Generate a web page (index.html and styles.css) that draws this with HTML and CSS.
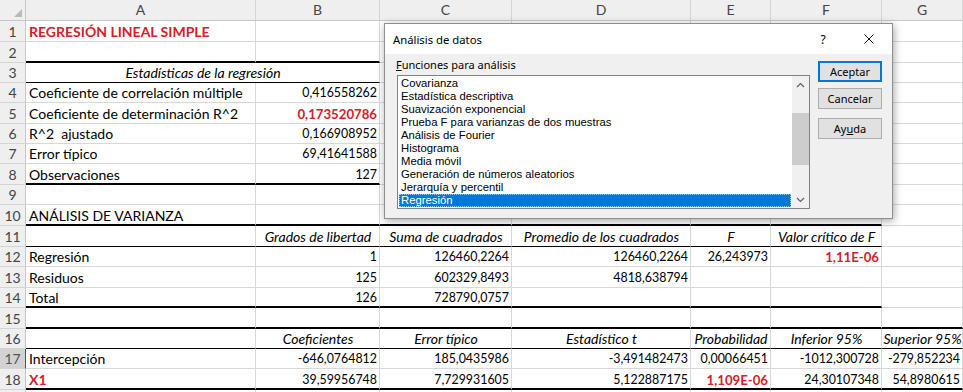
FILE: index.html
```html
<!DOCTYPE html>
<html lang="es">
<head>
<meta charset="utf-8">
<title>Regresión lineal simple</title>
<link rel="stylesheet" href="styles.css">
</head>
<body>
<div class="sheet">
  <!-- column headers -->
  <div class="c ch corner"><svg width="8" height="8" viewBox="0 0 8 8"><polygon points="0,8 8,8 8,0" fill="#b9b9b9"/></svg></div>
  <div class="c ch">A</div><div class="c ch">B</div><div class="c ch">C</div><div class="c ch">D</div><div class="c ch">E</div><div class="c ch">F</div><div class="c ch">G</div>

  <!-- 1 -->
  <div class="c rh">1</div>
  <div class="c red">REGRESIÓN LINEAL SIMPLE</div><div class="c"></div><div class="c"></div><div class="c"></div><div class="c"></div><div class="c"></div><div class="c"></div>
  <!-- 2 -->
  <div class="c rh">2</div>
  <div class="c tb"></div><div class="c tb"></div><div class="c"></div><div class="c"></div><div class="c"></div><div class="c"></div><div class="c"></div>
  <!-- 3 -->
  <div class="c rh">3</div>
  <div class="c span2 ctr it tn">Estadísticas de la regresión</div><div class="c"></div><div class="c"></div><div class="c"></div><div class="c"></div><div class="c"></div>
  <!-- 4 -->
  <div class="c rh">4</div>
  <div class="c">Coeficiente de correlación múltiple</div><div class="c num">0,416558262</div><div class="c"></div><div class="c"></div><div class="c"></div><div class="c"></div><div class="c"></div>
  <!-- 5 -->
  <div class="c rh">5</div>
  <div class="c">Coeficiente de determinación R^2</div><div class="c num red">0,173520786</div><div class="c"></div><div class="c"></div><div class="c"></div><div class="c"></div><div class="c"></div>
  <!-- 6 -->
  <div class="c rh">6</div>
  <div class="c">R^2&nbsp; ajustado</div><div class="c num">0,166908952</div><div class="c"></div><div class="c"></div><div class="c"></div><div class="c"></div><div class="c"></div>
  <!-- 7 -->
  <div class="c rh">7</div>
  <div class="c">Error típico</div><div class="c num">69,41641588</div><div class="c"></div><div class="c"></div><div class="c"></div><div class="c"></div><div class="c"></div>
  <!-- 8 -->
  <div class="c rh">8</div>
  <div class="c tb">Observaciones</div><div class="c num tb">127</div><div class="c"></div><div class="c"></div><div class="c"></div><div class="c"></div><div class="c"></div>
  <!-- 9 -->
  <div class="c rh">9</div>
  <div class="c"></div><div class="c"></div><div class="c"></div><div class="c"></div><div class="c"></div><div class="c"></div><div class="c"></div>
  <!-- 10 -->
  <div class="c rh">10</div>
  <div class="c tb">ANÁLISIS DE VARIANZA</div><div class="c tb"></div><div class="c tb"></div><div class="c tb"></div><div class="c tb"></div><div class="c tb"></div><div class="c"></div>
  <!-- 11 -->
  <div class="c rh">11</div>
  <div class="c tn"></div><div class="c ctr it tn">Grados de libertad</div><div class="c ctr it tn">Suma de cuadrados</div><div class="c ctr it tn">Promedio de los cuadrados</div><div class="c ctr it tn">F</div><div class="c ctr it tn">Valor crítico de F</div><div class="c"></div>
  <!-- 12 -->
  <div class="c rh">12</div>
  <div class="c">Regresión</div><div class="c num">1</div><div class="c num">126460,2264</div><div class="c num">126460,2264</div><div class="c num">26,243973</div><div class="c num red">1,11E-06</div><div class="c"></div>
  <!-- 13 -->
  <div class="c rh">13</div>
  <div class="c">Residuos</div><div class="c num">125</div><div class="c num">602329,8493</div><div class="c num">4818,638794</div><div class="c"></div><div class="c"></div><div class="c"></div>
  <!-- 14 -->
  <div class="c rh">14</div>
  <div class="c tb">Total</div><div class="c num tb">126</div><div class="c num tb">728790,0757</div><div class="c tb"></div><div class="c tb"></div><div class="c tb"></div><div class="c"></div>
  <!-- 15 -->
  <div class="c rh">15</div>
  <div class="c tb"></div><div class="c tb"></div><div class="c tb"></div><div class="c tb"></div><div class="c tb"></div><div class="c tb"></div><div class="c tb"></div>
  <!-- 16 -->
  <div class="c rh">16</div>
  <div class="c tn"></div><div class="c ctr it tn">Coeficientes</div><div class="c ctr it tn">Error típico</div><div class="c ctr it tn">Estadístico t</div><div class="c ctr it tn">Probabilidad</div><div class="c ctr it tn">Inferior 95%</div><div class="c ctr it tn">Superior 95%</div>
  <!-- 17 -->
  <div class="c rh rh-sel">17</div>
  <div class="c">Intercepción</div><div class="c num">-646,0764812</div><div class="c num">185,0435986</div><div class="c num">-3,491482473</div><div class="c num">0,00066451</div><div class="c num">-1012,300728</div><div class="c num">-279,852234</div>
  <!-- 18 -->
  <div class="c rh">18</div>
  <div class="c tb red">X1</div><div class="c num tb">39,59956748</div><div class="c num tb">7,729931605</div><div class="c num tb">5,122887175</div><div class="c num tb red">1,109E-06</div><div class="c num tb">24,30107348</div><div class="c num tb">54,8980615</div>
  <!-- 19 (only its top edge is visible) -->
  <div class="c rh"></div>
  <div class="c"></div><div class="c"></div><div class="c"></div><div class="c"></div><div class="c"></div><div class="c"></div><div class="c"></div>
</div>

<div class="dlg">
  <div class="dlg-title">
    <span class="dlg-name">Análisis de datos</span>
    <span class="dlg-help">?</span>
    <span class="dlg-close"><svg width="10" height="10" viewBox="0 0 10 10"><path d="M0.5 0.5L9.5 9.5M9.5 0.5L0.5 9.5" stroke="#111" stroke-width="1" fill="none"/></svg></span>
  </div>
  <div class="dlg-body">
    <div class="dlg-left">
      <div class="dlg-label"><span class="ul">F</span>unciones para análisis</div>
      <div class="listbox">
        <div class="items">
          <div class="item">Covarianza</div>
          <div class="item">Estadística descriptiva</div>
          <div class="item">Suavización exponencial</div>
          <div class="item">Prueba F para varianzas de dos muestras</div>
          <div class="item">Análisis de Fourier</div>
          <div class="item">Histograma</div>
          <div class="item">Media móvil</div>
          <div class="item">Generación de números aleatorios</div>
          <div class="item">Jerarquía y percentil</div>
          <div class="item sel">Regresión</div>
        </div>
        <div class="vscroll">
          <div class="arrow"><svg width="9" height="6" viewBox="0 0 9 6"><path d="M1 5L4.5 1.5L8 5" stroke="#606060" stroke-width="1.2" fill="none"/></svg></div>
          <div class="track"><div class="thumb"></div></div>
          <div class="arrow"><svg width="9" height="6" viewBox="0 0 9 6"><path d="M1 1L4.5 4.5L8 1" stroke="#606060" stroke-width="1.2" fill="none"/></svg></div>
        </div>
      </div>
    </div>
    <div class="dlg-btns">
      <div class="btn btn-default">Aceptar</div>
      <div class="btn btn-2">Cancelar</div>
      <div class="btn btn-3">Ay<span class="ul">u</span>da</div>
    </div>
  </div>
</div>
</body>
</html>
```

FILE: styles.css
```css
html, body {
  margin: 0;
  padding: 0;
}
body {
  background: #fff;
  width: 963px;
  height: 392px;
  overflow: hidden;
  position: relative;
  font-family: Lato, "Liberation Sans", sans-serif;
}

/* ---------- spreadsheet ---------- */
.sheet {
  display: grid;
  grid-template-columns: 26px 230px 124px 132px 179px 80px 111px 81px;
  grid-template-rows: 21px 21px 21px 20px 20px 21px 20px 20px 21px 20px 21px 21px 20px 21px 20px 21px 20px 20px 21px 20px;
  font-size: 14px;
  color: #000;
}
.c {
  box-sizing: border-box;
  border-right: 1px solid #d8d8d8;
  border-bottom: 1px solid #d8d8d8;
  display: flex;
  align-items: flex-end;
  padding: 0 2px 1px 3px;
  line-height: 16px;
  white-space: nowrap;
  min-width: 0;
}
.num {
  justify-content: flex-end;
  font-size: 12.4px;
}
.ctr { justify-content: center; }
.it { font-style: italic; }
.red {
  color: #d3202b;
  font-weight: 700;
}
.num.red { font-size: 13.2px; }
.tb {
  border-bottom: 2px solid #000;
  padding-bottom: 0;
}
.tn { border-bottom-color: #000; }
.span2 { grid-column: span 2; }

.ch {
  background: #efefef;
  color: #444;
  justify-content: center;
  align-items: center;
  padding: 0;
  border-bottom-color: #c6c6c6;
  border-right-color: #d4d4d4;
}
.corner {
  justify-content: flex-end;
  align-items: flex-end;
  padding: 0 3px 3px 0;
  border-right-color: #c6c6c6;
}
.rh {
  background: #efefef;
  color: #444;
  justify-content: center;
  padding: 0 0 1px 0;
  border-right-color: #c6c6c6;
  border-bottom-color: #d4d4d4;
}
.rh-sel {
  background: #d2d2d2;
  color: #555;
  border-right: 1px solid #217346;
}

/* ---------- dialog ---------- */
.dlg {
  position: absolute;
  left: 384px;
  top: 23px;
  width: 509px;
  height: 196px;
  box-sizing: border-box;
  border: 1px solid #8e8e8e;
  background: #f0f0f0;
  box-shadow: 1px 2px 8px rgba(0, 0, 0, 0.35);
  font-family: "Noto Sans", "Liberation Sans", sans-serif;
  font-size: 11px;
  color: #000;
  display: flex;
  flex-direction: column;
}
.dlg-title {
  flex: none;
  height: 30px;
  background: #fff;
  display: flex;
  align-items: center;
  padding-left: 8px;
}
.dlg-name { flex: 1; font-size: 11.3px; }
.dlg-help {
  width: 12px;
  text-align: center;
  margin-right: 17px;
  font-size: 12px;
}
.dlg-close {
  width: 46px;
  height: 30px;
  display: flex;
  align-items: center;
  justify-content: center;
}
.dlg-body {
  flex: 1;
  display: flex;
  gap: 8px;
  padding: 4px 0 0 12px;
}
.dlg-label {
  height: 13px;
  line-height: 13px;
  margin: 0 0 4px -1px;
}
.ul { text-decoration: underline; }
.listbox {
  width: 413px;
  height: 134px;
  box-sizing: border-box;
  border: 1px solid #828282;
  background: #fff;
  display: flex;
}
.items {
  flex: 1;
  padding-top: 1px;
}
.item {
  height: 13px;
  line-height: 13px;
  margin: 0 1px;
  padding-left: 2px;
  font-family: "Liberation Sans", Arial, sans-serif;
  font-size: 11.3px;
  white-space: nowrap;
}
.sel {
  background: #0078d7;
  color: #fff;
  box-sizing: border-box;
  outline: 1px dotted #9ccbf0;
  outline-offset: -1px;
}
.vscroll {
  width: 17px;
  background: #f0f0f0;
  display: flex;
  flex-direction: column;
}
.arrow {
  height: 17px;
  display: flex;
  align-items: center;
  justify-content: center;
}
.track {
  flex: 1;
  padding-top: 20px;
}
.thumb {
  height: 52px;
  background: #cdcdcd;
}
.dlg-btns {
  width: 64px;
  padding-top: 3px;
  display: flex;
  flex-direction: column;
}
.btn {
  height: 21px;
  box-sizing: border-box;
  border: 1px solid #adadad;
  background: #e1e1e1;
  display: flex;
  align-items: center;
  justify-content: center;
}
.btn-default { border: 2px solid #0078d7; }
.btn-2 { margin-top: 6px; }
.btn-3 { margin-top: 9px; }
```
